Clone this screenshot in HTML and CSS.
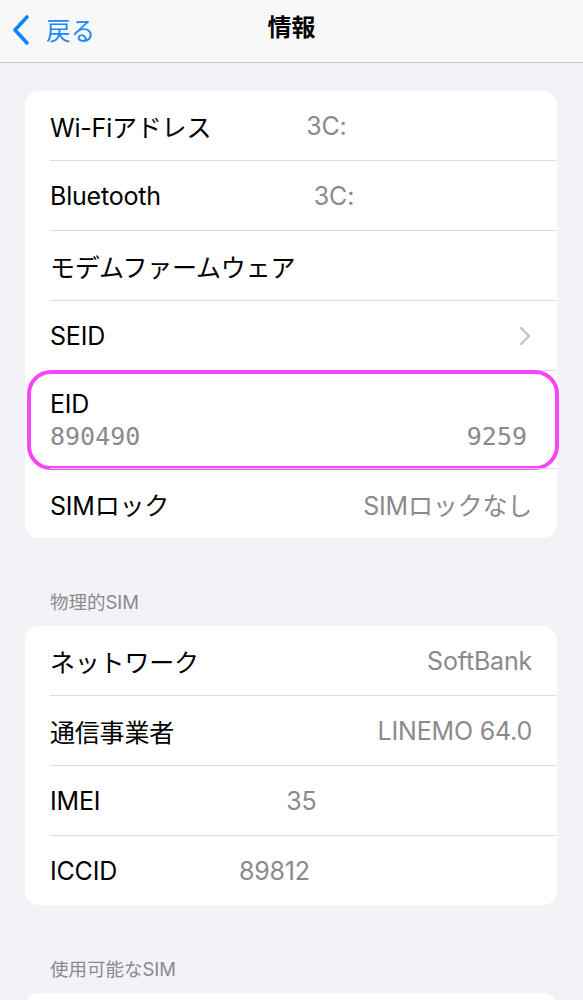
FILE: index.html
```html
<!DOCTYPE html>
<html lang="ja">
<head>
    <meta charset="UTF-8">
    <meta name="viewport" content="width=device-width, initial-scale=1.0">
    <title>情報</title>
    <link rel="stylesheet" href="styles.css">
</head>
<body>
    <header class="navbar">
        <a class="back" href="#">
            <svg class="back-icon" width="18" height="32" viewBox="0 0 18 32">
                <path d="M15 3 L3 16 L15 29" fill="none" stroke="#0a84ff" stroke-width="3.6" stroke-linecap="round" stroke-linejoin="round"/>
            </svg>
            <span>戻る</span>
        </a>
        <h1 class="title">情報</h1>
    </header>

    <main class="content">
        <section class="group">
            <div class="row first">
                <div class="row-inner">
                    <span class="label">Wi-Fiアドレス</span>
                    <span class="value val-wifi">3C:</span>
                </div>
            </div>
            <div class="row">
                <div class="row-inner">
                    <span class="label">Bluetooth</span>
                    <span class="value val-bt">3C:</span>
                </div>
            </div>
            <div class="row">
                <div class="row-inner">
                    <span class="label">モデムファームウェア</span>
                </div>
            </div>
            <div class="row">
                <div class="row-inner">
                    <span class="label">SEID</span>
                    <svg class="chevron" width="12" height="20" viewBox="0 0 12 20">
                        <path d="M2 2 L10 10 L2 18" fill="none" stroke="#c4c4c7" stroke-width="2.4" stroke-linecap="round" stroke-linejoin="round"/>
                    </svg>
                </div>
            </div>
            <div class="row eid">
                <div class="row-inner stacked">
                    <span class="label">EID</span>
                    <div class="mono">
                        <span>890490</span>
                        <span>9259</span>
                    </div>
                </div>
                <div class="highlight"></div>
            </div>
            <div class="row">
                <div class="row-inner">
                    <span class="label">SIMロック</span>
                    <span class="value right">SIMロックなし</span>
                </div>
            </div>
        </section>

        <h2 class="group-title">物理的SIM</h2>
        <section class="group">
            <div class="row first">
                <div class="row-inner">
                    <span class="label">ネットワーク</span>
                    <span class="value right">SoftBank</span>
                </div>
            </div>
            <div class="row">
                <div class="row-inner">
                    <span class="label">通信事業者</span>
                    <span class="value right">LINEMO 64.0</span>
                </div>
            </div>
            <div class="row">
                <div class="row-inner">
                    <span class="label">IMEI</span>
                    <span class="value val-imei">35</span>
                </div>
            </div>
            <div class="row">
                <div class="row-inner">
                    <span class="label">ICCID</span>
                    <span class="value val-iccid">89812</span>
                </div>
            </div>
        </section>

        <h2 class="group-title">使用可能なSIM</h2>
        <section class="group">
            <div class="row first">
                <div class="row-inner"></div>
            </div>
        </section>
    </main>
</body>
</html>
```

FILE: styles.css
```css
* {
    box-sizing: border-box;
}
body {
    margin: 0;
    font-family: Inter, "Noto Sans CJK JP", sans-serif;
    background-color: #f2f2f7;
    color: #000;
}
.navbar {
    height: 63px;
    background-color: #f8f8f8;
    border-bottom: 1px solid #c6c6c8;
    display: flex;
    align-items: center;
    justify-content: center;
    position: relative;
}
.back {
    position: absolute;
    left: 12px;
    top: 12px;
    display: flex;
    align-items: center;
    gap: 16px;
    color: #1a87ff;
    text-decoration: none;
    font-size: 24.5px;
}
.back-icon {
    display: block;
}
.title {
    margin: 0;
    font-size: 24px;
    font-weight: 700;
    line-height: 28px;
    padding-bottom: 6px;
}
.content {
    padding: 28px 26px 0 25px;
}
.group {
    background-color: #fff;
    border-radius: 14px;
}
.row {
    padding-left: 25px;
    position: relative;
}
.row-inner {
    height: 70px;
    border-top: 1px solid #dcdcde;
    display: flex;
    align-items: center;
    padding-right: 25px;
    font-size: 25px;
    letter-spacing: -0.2px;
}
.row.first .row-inner {
    height: 69px;
    border-top: none;
}
.label {
    white-space: nowrap;
}
.value {
    color: #8a8a8e;
    white-space: nowrap;
}
.right {
    margin-left: auto;
}
.val-wifi {
    margin-left: 95px;
}
.val-bt {
    margin-left: 153px;
}
.val-imei {
    margin-left: 186px;
}
.val-iccid {
    margin-left: 122px;
}
.chevron {
    margin-left: auto;
    margin-right: 1px;
}
.row.eid .row-inner {
    height: 98px;
}
.stacked {
    flex-direction: column;
    align-items: stretch;
    justify-content: center;
    gap: 3px;
    padding-right: 30px;
}
.mono {
    display: flex;
    justify-content: space-between;
    font-family: "DejaVu Sans Mono", monospace;
    font-size: 25px;
    color: #8a8a8e;
    letter-spacing: 0;
}
.highlight {
    position: absolute;
    left: 2px;
    right: -2px;
    top: 0;
    bottom: -2px;
    border: 4px solid #fb44f6;
    border-radius: 24px;
    pointer-events: none;
}
.group-title {
    margin: 52px 0 12px 25px;
    font-size: 18.5px;
    font-weight: 400;
    line-height: 24px;
    color: #8a8a8e;
}
```
